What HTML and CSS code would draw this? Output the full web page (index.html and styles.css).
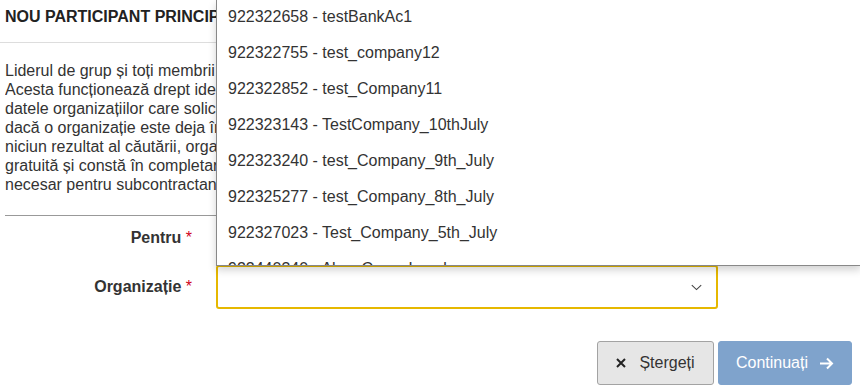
FILE: index.html
```html
<!DOCTYPE html>
<html lang="ro">
<head>
    <meta charset="UTF-8">
    <meta name="viewport" content="width=device-width, initial-scale=1.0">
    <title>Nou participant principal</title>
    <link rel="stylesheet" href="styles.css">
</head>
<body>

<div class="page">
    <h4 class="title">NOU PARTICIPANT PRINCIPAL</h4>
    <hr class="rule-light">

    <p class="intro">
        Liderul de grup și toți membrii consorțiului trebuie să fie înregistrați în Registrul participanților.<br>
        Acesta funcționează drept identificator unic al participantului pentru toate propunerile depuse.<br>
        datele organizațiilor care solicită finanțare sunt verificate o singură dată. Verificați mai întâi<br>
        dacă o organizație este deja înregistrată, căutând după nume sau după codul PIC. Dacă nu există<br>
        niciun rezultat al căutării, organizația trebuie înregistrată. Înregistrarea este simplă,<br>
        gratuită și constă în completarea unui formular online. Același cod PIC este<br>
        necesar pentru subcontractanți și pentru părțile terțe implicate în proiect.
    </p>

    <hr class="rule-dark">

    <div class="form-row">
        <label class="form-label">Pentru <span class="req">*</span></label>
        <div class="form-field"></div>
    </div>
    <div class="form-row">
        <label class="form-label">Organizație <span class="req">*</span></label>
        <div class="form-field">
            <div class="select">
                <svg class="chevron" width="11" height="7" viewBox="0 0 11 7">
                    <path d="M0.8 1.2 L5.5 5.6 L10.2 1.2" fill="none" stroke="#444" stroke-width="1.1"/>
                </svg>
            </div>
        </div>
    </div>

    <div class="actions">
        <button class="btn btn-clear">
            <svg class="icon-x" width="10" height="10" viewBox="0 0 10 10">
                <path d="M1 1 L9 9 M9 1 L1 9" stroke="#222" stroke-width="2"/>
            </svg>
            Ștergeți
        </button>
        <button class="btn btn-next">
            Continuați
            <svg class="icon-arrow" width="15" height="13" viewBox="0 0 15 13">
                <path d="M1 6.5 H13 M8 1.5 L13 6.5 L8 11.5" fill="none" stroke="#fff" stroke-width="2"/>
            </svg>
        </button>
    </div>
</div>

<ul class="dropdown">
    <li>922322658 - testBankAc1</li>
    <li>922322755 - test_company12</li>
    <li>922322852 - test_Company11</li>
    <li>922323143 - TestCompany_10thJuly</li>
    <li>922323240 - test_Company_9th_July</li>
    <li>922325277 - test_Company_8th_July</li>
    <li>922327023 - Test_Company_5th_July</li>
    <li>922440340 - Alex_Coop_Level</li>
</ul>

</body>
</html>
```

FILE: styles.css
```css
body {
    margin: 0;
    font-family: "Liberation Sans", Arial, sans-serif;
    color: #333;
    background: #fff;
}
.page {
    padding: 0 8px 0 5px;
}
.title {
    margin: 0;
    padding-top: 8px;
    height: 26px;
    line-height: 18px;
    font-size: 16px;
    font-weight: bold;
    color: #222;
}
.rule-light {
    margin: 8px -8px 0 -5px;
    border: 0;
    border-top: 1px solid #ddd;
}
.intro {
    margin: 18px 0 0 0;
    font-size: 16px;
    line-height: 19px;
    white-space: nowrap;
    overflow: hidden;
}
.rule-dark {
    margin: 21px 0 0 0;
    border: 0;
    border-top: 1px solid #999;
}
.form-row {
    display: flex;
    align-items: center;
    height: 44px;
}
.form-row + .form-row {
    margin-top: 5px;
}
.form-label {
    width: 187px;
    padding-right: 24px;
    text-align: right;
    font-size: 16px;
    font-weight: bold;
    color: #333;
}
.req {
    color: #d0021b;
    font-weight: normal;
}
.form-field {
    width: 502px;
}
.select {
    height: 40px;
    border: 2px solid #e6b800;
    border-radius: 3px;
    display: flex;
    align-items: center;
    justify-content: flex-end;
    padding-right: 14px;
}
.chevron {
    display: block;
    margin-top: 1px;
}
.actions {
    display: flex;
    justify-content: flex-end;
    gap: 4px;
    margin-top: 32px;
}
.btn {
    height: 44px;
    font-family: "Liberation Sans", Arial, sans-serif;
    font-size: 16px;
    border-radius: 3px;
    display: flex;
    align-items: center;
    justify-content: center;
}
.btn-clear {
    width: 117px;
    background: #e6e6e6;
    border: 1px solid #a3a3a3;
    color: #333;
}
.icon-x {
    margin-right: 13px;
}
.btn-next {
    width: 134px;
    background: #7fa3cc;
    border: 1px solid #7fa3cc;
    color: #fff;
}
.icon-arrow {
    margin-left: 11px;
}
.dropdown {
    position: absolute;
    top: 0;
    left: 216px;
    width: 644px;
    height: 265px;
    margin: 0;
    padding: 0;
    list-style: none;
    background: #fff;
    border-left: 1px solid #888;
    border-bottom: 1px solid #888;
    box-shadow: 0 4px 8px rgba(0, 0, 0, 0.18);
    overflow: hidden;
}
.dropdown li {
    height: 36px;
    line-height: 34px;
    padding-left: 11px;
    font-size: 16px;
    color: #333;
}
```
